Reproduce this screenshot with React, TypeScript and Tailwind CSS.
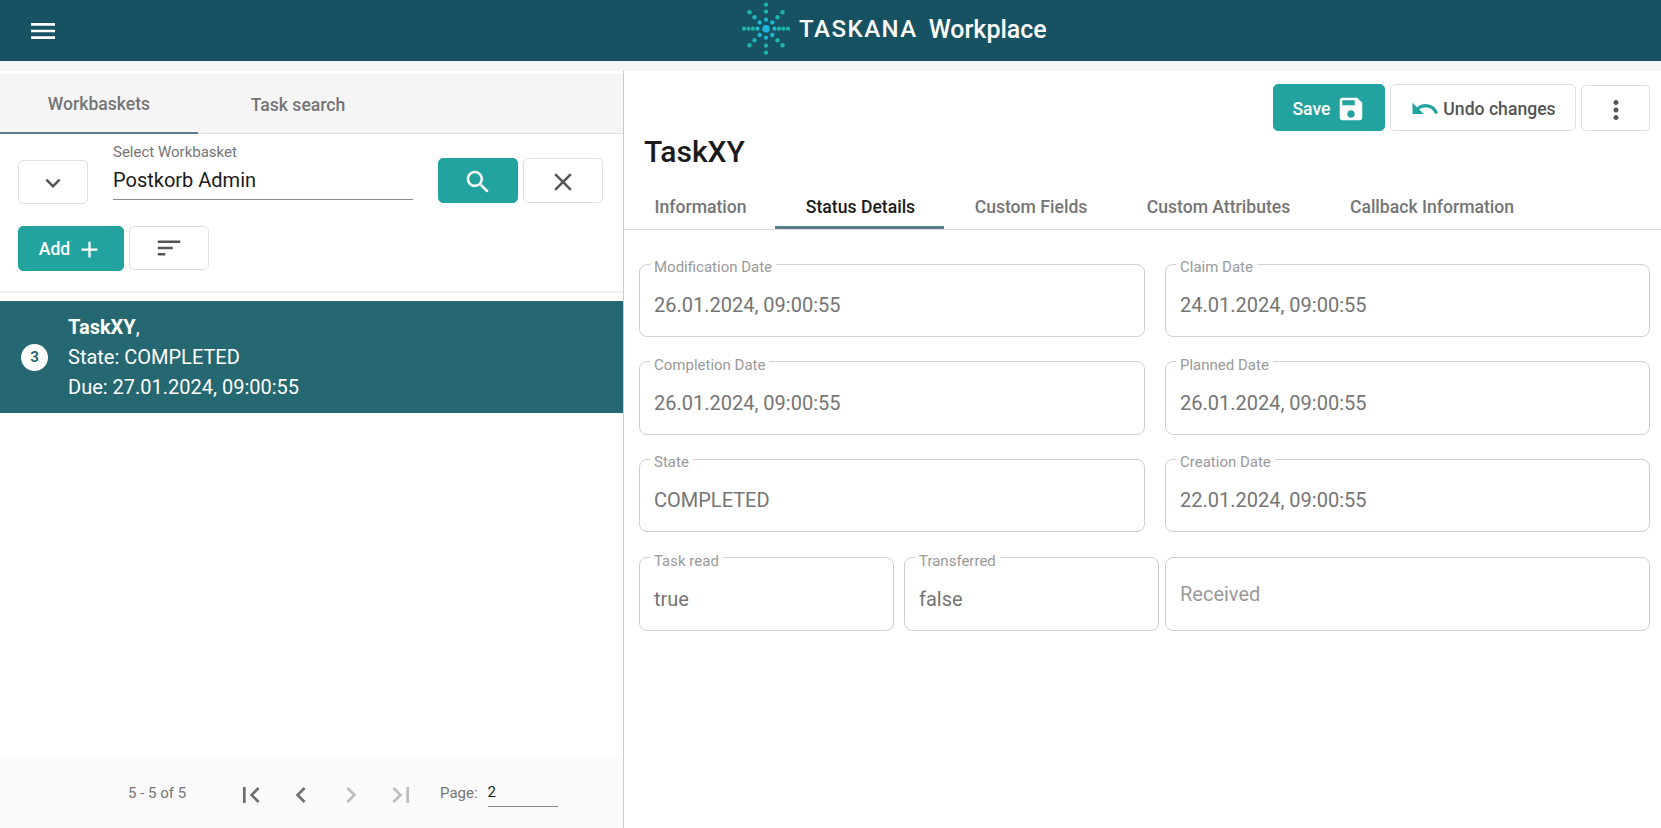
const ICONS = {
  menu: "M3 18h18v-2H3v2zm0-5h18v-2H3v2zm0-7v2h18V6H3z",
  down: "M7.41 8.59L12 13.17l4.59-4.58L18 10l-6 6-6-6 1.41-1.41z",
  search:
    "M15.5 14h-.79l-.28-.27C15.41 12.59 16 11.11 16 9.5 16 5.91 13.09 3 9.5 3S3 5.91 3 9.5 5.91 16 9.5 16c1.61 0 3.09-.59 4.23-1.57l.27.28v.79l5 4.99L20.49 19l-4.99-5zm-6 0C7.01 14 5 11.99 5 9.5S7.01 5 9.5 5 14 7.01 14 9.5 11.99 14 9.5 14z",
  clear:
    "M19 6.41L17.59 5 12 10.59 6.41 5 5 6.41 10.59 12 5 17.59 6.41 19 12 13.41 17.59 19 19 17.59 13.41 12z",
  add: "M19 13h-6v6h-2v-6H5v-2h6V5h2v6h6v2z",
  sort: "M3 18h6v-2H3v2zM3 6v2h18V6H3zm0 7h12v-2H3v2z",
  save: "M17 3H5c-1.11 0-2 .9-2 2v14c0 1.1.89 2 2 2h14c1.1 0 2-.9 2-2V7l-4-4zm-5 16c-1.66 0-3-1.34-3-3s1.34-3 3-3 3 1.34 3 3-1.34 3-3 3zm3-10H5V5h10v4z",
  undo: "M12.5 8c-2.65 0-5.05.99-6.9 2.6L2 7v9h9l-3.62-3.62c1.39-1.16 3.16-1.88 5.12-1.88 3.54 0 6.55 2.31 7.6 5.5l2.37-.78C21.08 11.03 17.15 8 12.5 8z",
  more: "M12 8c1.1 0 2-.9 2-2s-.9-2-2-2-2 .9-2 2 .9 2 2 2zm0 2c-1.1 0-2 .9-2 2s.9 2 2 2 2-.9 2-2-.9-2-2-2zm0 6c-1.1 0-2 .9-2 2s.9 2 2 2 2-.9 2-2-.9-2-2-2z",
  first: "M18.41 16.59L13.82 12l4.59-4.59L17 6l-6 6 6 6zM6 6h2v12H6z",
  prev: "M15.41 7.41L14 6l-6 6 6 6 1.41-1.41L10.83 12z",
  next: "M10 6L8.59 7.41 13.17 12l-4.58 4.59L10 18l6-6z",
  last: "M5.59 7.41L10.18 12l-4.59 4.59L7 18l6-6-6-6zM16 6h2v12h-2z",
}

type IconName = keyof typeof ICONS

function Icon({ name, size = 30, className = "" }: { name: IconName; size?: number; className?: string }) {
  return (
    <svg width={size} height={size} viewBox="0 0 24 24" fill="currentColor" className={`shrink-0 ${className}`}>
      <path d={ICONS[name]} />
    </svg>
  )
}

function Logo() {
  const dots: { x: number; y: number; r: number; c: string }[] = []
  const spokes = [
    [0, -1],
    [0, 1],
    [1, 0],
    [-1, 0],
  ]
  spokes.forEach(([dx, dy]) => {
    const dist = dx !== 0 ? [8.5, 13, 17.5, 22] : [9, 17, 24]
    dist.forEach((d, i) => {
      dots.push({ x: 26 + dx * d, y: 27.7 + dy * d, r: 2.1, c: i === 0 ? "#1fb8cf" : "#1fb5a4" })
    })
  })
  const diagonals = [
    [1, 1],
    [1, -1],
    [-1, 1],
    [-1, -1],
  ]
  diagonals.forEach(([dx, dy]) => {
    ;[6.3, 11.5, 16.5].forEach((d, i) => {
      dots.push({ x: 26 + dx * d, y: 27.7 + dy * d, r: 2.2, c: i === 0 ? "#1fb8cf" : i === 1 ? "#1fb5b4" : "#1fb5a4" })
    })
  })
  return (
    <svg width="52" height="54" viewBox="0 0 52 54" className="mb-[1px] shrink-0">
      {dots.map((d, i) => (
        <circle key={i} cx={d.x} cy={d.y} r={d.r} fill={d.c} />
      ))}
      <circle cx="26" cy="27.7" r="3.8" fill="#1fb4e2" />
    </svg>
  )
}

function OutlineField({ label, value, className = "" }: { label: string; value: string; className?: string }) {
  return (
    <fieldset className={`h-[83px] min-w-0 rounded-[8px] border border-[#cfcfcf] px-[14px] ${className}`}>
      <legend className="ml-[-4px] px-[4px] pt-[6px] text-[15px] leading-[14px] text-[#9a9a9a]">{label}</legend>
      <div className="pt-[19px] text-[20px] leading-[24px] text-[#757575]">{value}</div>
    </fieldset>
  )
}

function Button({ children, primary, className = "" }: { children: React.ReactNode; primary?: boolean; className?: string }) {
  return (
    <button
      className={`flex items-center justify-center rounded-[5px] border ${
        primary ? "border-[#22a39f] bg-[#22a39f] text-white" : "border-[#e0e0e0] bg-white text-[#555555]"
      } ${className}`}
    >
      {children}
    </button>
  )
}

const DETAIL_TABS = [
  { label: "Information", w: "w-[151px]" },
  { label: "Status Details", w: "w-[169px]", active: true },
  { label: "Custom Fields", w: "w-[172px]" },
  { label: "Custom Attributes", w: "w-[203px]" },
  { label: "Callback Information", w: "w-[224px]" },
]

export default function App() {
  return (
    <div className="flex h-screen flex-col overflow-hidden bg-white font-['Roboto',sans-serif]">
      <header className="flex h-[61px] shrink-0 items-center bg-[#175263] pl-[27px] text-white">
        <Icon name="menu" size={32} />
        <div className="ml-[681px] flex items-center pb-[4px]">
          <Logo />
          <span className="ml-[7px] text-[24px] font-medium tracking-[1.5px]">TASKANA</span>
          <span className="ml-[11px] mt-[2px] text-[25px] font-medium">Workplace</span>
        </div>
      </header>
      <div className="h-[10px] shrink-0 bg-[#f5f5f5]" />

      <main className="flex min-h-0 flex-1">
        {/* task list */}
        <section className="flex w-[624px] shrink-0 flex-col border-r border-[#cccccc] pt-[3px]">
          <div className="flex h-[60px] shrink-0 border-b border-[#dedede] bg-[#f5f5f5] text-[17.6px] font-medium text-[#757575]">
            <div className="flex h-[60px] w-[198px] items-center justify-center border-b-2 border-[#5a7d8c] pt-[3px]">Workbaskets</div>
            <div className="flex h-[60px] w-[198px] items-center justify-center pt-[3px] pl-[2px]">Task search</div>
          </div>

          <div className="flex items-start pl-[18px] pt-[10px]">
            <Button className="mt-[16px] h-[44px] w-[70px] pt-[2px]">
              <Icon name="down" />
            </Button>
            <div className="ml-[25px] w-[300px] border-b border-[#8a8a8a]">
              <div className="text-[15px] leading-[16px] text-[#757575]">Select Workbasket</div>
              <div className="pb-[7px] pt-[8px] text-[20px] leading-[24px] text-[#1a1a1a]">Postkorb Admin</div>
            </div>
            <Button primary className="ml-[25px] mt-[14px] h-[45px] w-[80px] pt-[2px]">
              <Icon name="search" />
            </Button>
            <Button className="ml-[5px] mt-[14px] h-[45px] w-[80px] pt-[3px]">
              <Icon name="clear" />
            </Button>
          </div>

          <div className="mt-[22px] flex items-start gap-[5px] border-b-2 border-[#eeeeee] pb-[20px] pl-[18px]">
            <Button primary className="h-[45px] w-[106px] gap-[6px] pt-[1px] text-[17.6px] font-medium">
              Add
              <Icon name="add" size={27} />
            </Button>
            <Button className="h-[44px] w-[80px]">
              <Icon name="sort" />
            </Button>
          </div>

          <div className="mt-[8px] flex h-[112px] items-center bg-[#266871] pl-[21px] text-[20px] leading-[30px] text-white">
            <span className="flex h-[27px] w-[27px] items-center justify-center rounded-full bg-white text-[15px] font-bold text-[#266871]">
              3
            </span>
            <div className="ml-[20px]">
              <div>
                <b className="font-bold">TaskXY</b>,
              </div>
              <div>State: COMPLETED</div>
              <div>Due: 27.01.2024, 09:00:55</div>
            </div>
          </div>

          <footer className="mt-auto flex h-[69px] shrink-0 items-center bg-[#fafafa] pl-[128px] text-[15px] text-[#757575]">
            <span className="w-[98px]">5 - 5 of 5</span>
            <div className="flex pt-[2px]">
              <span className="flex w-[50px] justify-center"><Icon name="first" size={32} className="text-[#6f6f6f]" /></span>
              <span className="flex w-[50px] justify-center"><Icon name="prev" size={32} className="text-[#6f6f6f]" /></span>
              <span className="flex w-[50px] justify-center"><Icon name="next" size={32} className="text-[#bdbdbd]" /></span>
              <span className="flex w-[50px] justify-center"><Icon name="last" size={32} className="text-[#bdbdbd]" /></span>
            </div>
            <span className="ml-[14px]">Page:</span>
            <div className="ml-[10px] mt-[2px] w-[70px] border-b border-[#8a8a8a] pb-[4px] text-[15px] leading-[20px] text-[#1a1a1a]">2</div>
          </footer>
        </section>

        {/* task details */}
        <section className="flex min-w-0 flex-1 flex-col">
          <div className="flex justify-end gap-[5px] pr-[11px] pt-[13px]">
            <Button primary className="h-[47px] w-[112px] gap-[5px] pt-[3px] text-[17.6px] font-medium">
              Save
              <Icon name="save" />
            </Button>
            <Button className="h-[47px] w-[186px] gap-[3px] pt-[3px] text-[17.6px] font-medium">
              <Icon name="undo" className="text-[#22a39f]" />
              Undo changes
            </Button>
            <Button className="mt-[1px] h-[46px] w-[69px] pt-[3px]">
              <Icon name="more" />
            </Button>
          </div>

          <h1 className="pl-[20px] pt-[3px] text-[30px] font-medium leading-[36px] text-[#1a1a1a]">TaskXY</h1>

          <div className="mt-[19px] flex h-[41px] border-b border-[#dedede] text-[17.6px] font-medium">
            {DETAIL_TABS.map((tab) => (
              <div
                key={tab.label}
                className={`flex h-[40px] items-center justify-center border-b-[3px] pl-[2px] ${tab.w} ${
                  tab.active ? "border-[#5a7d8c] text-[#1a1a1a]" : "border-transparent text-[#757575]"
                }`}
              >
                {tab.label}
              </div>
            ))}
          </div>

          <div className="flex flex-col gap-[15.5px] pl-[15px] pr-[11px] pt-[24px]">
            <div className="grid grid-cols-[506px_1fr] gap-x-[20px] gap-y-[14.5px]">
              <OutlineField label="Modification Date" value="26.01.2024, 09:00:55" />
              <OutlineField label="Claim Date" value="24.01.2024, 09:00:55" />
              <OutlineField label="Completion Date" value="26.01.2024, 09:00:55" />
              <OutlineField label="Planned Date" value="26.01.2024, 09:00:55" />
              <OutlineField label="State" value="COMPLETED" />
              <OutlineField label="Creation Date" value="22.01.2024, 09:00:55" />
            </div>
            <div className="flex">
              <OutlineField label="Task read" value="true" className="w-[255px]" />
              <OutlineField label="Transferred" value="false" className="ml-[10px] w-[255px]" />
              <div className="ml-[6px] mt-[9px] flex h-[74px] flex-1 items-center rounded-[8px] border border-[#cfcfcf] px-[14px] text-[20px] text-[#9a9a9a]">
                Received
              </div>
            </div>
          </div>
        </section>
      </main>
    </div>
  )
}
